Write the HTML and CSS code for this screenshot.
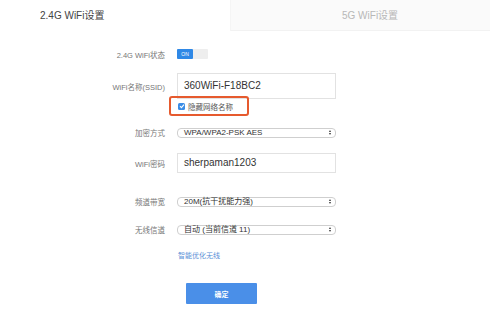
FILE: index.html
```html
<!DOCTYPE html>
<html lang="zh-CN">
<head>
    <meta charset="UTF-8">
    <title>WiFi设置</title>
    <link rel="stylesheet" href="styles.css">
</head>
<body>
    <div class="tabs">
        <div class="tab active">2.4G WiFi设置</div>
        <div class="tab">5G WiFi设置</div>
    </div>

    <div class="form">
        <div class="row row-status">
            <span class="label">2.4G WiFi状态</span>
            <span class="toggle"><span class="toggle-on">ON</span></span>
        </div>

        <div class="row row-ssid">
            <span class="label">WiFi名称(SSID)</span>
            <div class="input">360WiFi-F18BC2</div>
        </div>

        <div class="row row-hide">
            <span class="label"></span>
            <label class="hide-box">
                <span class="check">
                    <svg width="6" height="6" viewBox="0 0 6 6"><path d="M1 3.2 L2.4 4.6 L5 1.6" fill="none" stroke="#fff" stroke-width="1.1"/></svg>
                </span>
                隐藏网络名称
            </label>
        </div>

        <div class="row row-enc">
            <span class="label">加密方式</span>
            <div class="select">WPA/WPA2-PSK AES<span class="arrow"></span></div>
        </div>

        <div class="row row-pwd">
            <span class="label">WiFi密码</span>
            <div class="input">sherpaman1203</div>
        </div>

        <div class="row row-band">
            <span class="label">频道带宽</span>
            <div class="select">20M(抗干扰能力强)<span class="arrow"></span></div>
        </div>

        <div class="row row-chan">
            <span class="label">无线信道</span>
            <div class="select">自动 (当前信道 11)<span class="arrow"></span></div>
        </div>

        <div class="row row-link">
            <span class="label"></span>
            <a class="link" href="#">智能优化无线</a>
        </div>

        <div class="row row-btn">
            <span class="label"></span>
            <button class="submit">确定</button>
        </div>
    </div>
</body>
</html>
```

FILE: styles.css
```css
body {
    margin: 0;
    font-family: "Liberation Sans", "Noto Sans CJK SC", sans-serif;
    background: #fff;
    color: #333;
}
.tabs {
    display: flex;
    height: 31px;
}
.tab {
    font-size: 10px;
    line-height: 31px;
}
.tab.active {
    width: 230px;
    padding-left: 40px;
    box-sizing: border-box;
    color: #444;
}
.tab + .tab {
    flex: 1;
    padding-left: 111px;
    background: #fafafa;
    color: #b8b8b8;
    border-bottom: 1px solid #f2f2f2;
    border-left: 1px solid #f5f5f5;
}
.form {
    display: flex;
    flex-direction: column;
}
.row {
    display: flex;
    align-items: center;
}
.label {
    width: 165px;
    text-align: right;
    font-size: 7.5px;
    color: #777;
    margin-right: 12px;
    flex-shrink: 0;
}
.row-status { margin-top: 16px; height: 14px; }
.row-ssid { margin-top: 12px; }
.row-hide { margin-top: -3px; height: 20px; }
.row-enc { margin-top: 11px; }
.row-pwd { margin-top: 15px; }
.row-band { margin-top: 23px; }
.row-chan { margin-top: 17px; }
.row-link { margin-top: 15px; }
.row-btn { margin-top: 23px; }

.toggle {
    display: flex;
    width: 31px;
    height: 10px;
    background: #eeeeee;
    border-radius: 1px;
}
.toggle-on {
    width: 16px;
    background: #2f88e6;
    color: #fff;
    font-size: 5px;
    line-height: 10px;
    text-align: center;
    border-radius: 1px;
}
.input {
    width: 159px;
    box-sizing: border-box;
    border: 1px solid #e2e2e2;
    font-size: 10px;
    color: #333;
    padding-left: 6px;
}
.row-ssid .input { height: 26px; line-height: 24px; }
.row-pwd .input { height: 20px; line-height: 18px; }
.hide-box {
    display: flex;
    align-items: center;
    gap: 3px;
    margin-left: -8px;
    padding: 0 14px 0 7px;
    height: 20px;
    box-sizing: border-box;
    border: 2px solid #e65a2e;
    border-radius: 3px;
    font-size: 7.5px;
    color: #555;
}
.check {
    display: flex;
    align-items: center;
    justify-content: center;
    width: 7px;
    height: 7px;
    background: #3b8de6;
    border-radius: 1.5px;
}
.select {
    position: relative;
    width: 159px;
    height: 10px;
    box-sizing: border-box;
    border: 1px solid #cfcfcf;
    border-radius: 4px;
    font-size: 8px;
    line-height: 8px;
    color: #333;
    padding-left: 6px;
    background: #fff;
}
.arrow {
    position: absolute;
    right: 4px;
    top: 1px;
    width: 0;
    height: 0;
    border-left: 1.5px solid transparent;
    border-right: 1.5px solid transparent;
    border-bottom: 2.5px solid #333;
}
.arrow::after {
    content: "";
    position: absolute;
    left: -1.5px;
    top: 3.5px;
    border-left: 1.5px solid transparent;
    border-right: 1.5px solid transparent;
    border-top: 2.5px solid #333;
}
.link {
    font-size: 7px;
    color: #5b8fd6;
    text-decoration: none;
    margin-left: 1px;
}
.submit {
    margin-left: 9px;
    width: 71px;
    height: 21px;
    border: none;
    border-radius: 1px;
    background: #4a8fe8;
    color: #fff;
    font-size: 7px;
    font-weight: bold;
    font-family: inherit;
}
```
